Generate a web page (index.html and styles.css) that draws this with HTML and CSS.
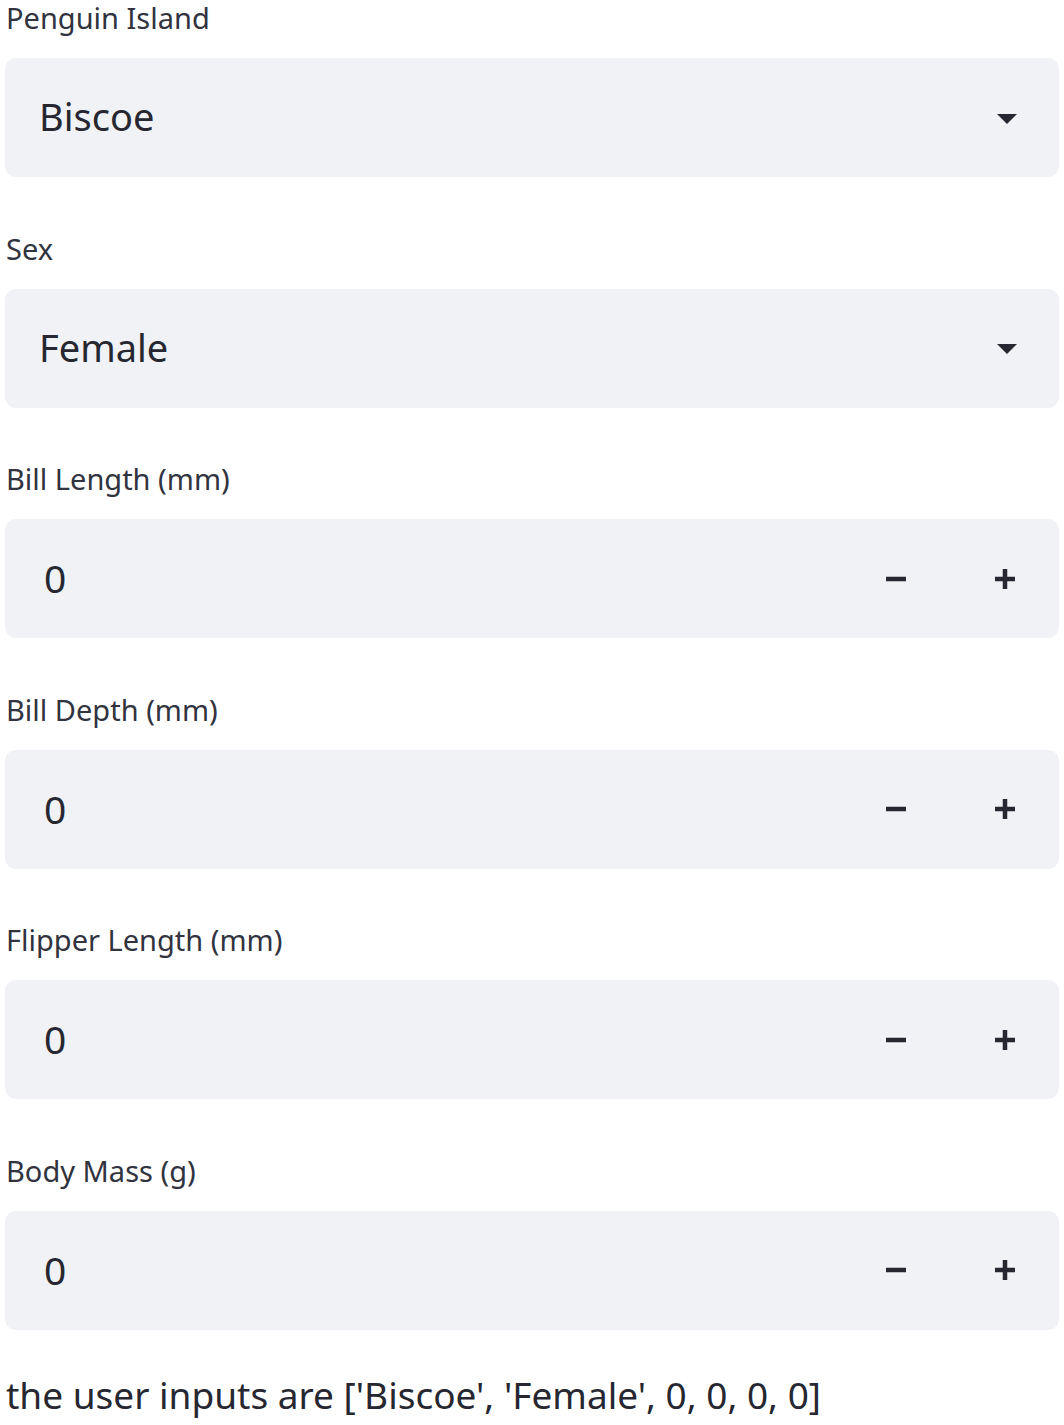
FILE: index.html
```html
<!DOCTYPE html>
<html lang="en">
<head>
<meta charset="utf-8">
<title>Penguin inputs</title>
<link rel="stylesheet" href="styles.css">
</head>
<body>
<main class="page">
  <div class="field">
    <div class="label">Penguin Island</div>
    <div class="box select">
      <span class="value">Biscoe</span>
      <svg class="caret" width="20" height="10" viewBox="0 0 20 10"><path d="M0 0h20L10 10z" fill="#262730"/></svg>
    </div>
  </div>
  <div class="field">
    <div class="label">Sex</div>
    <div class="box select">
      <span class="value">Female</span>
      <svg class="caret" width="20" height="10" viewBox="0 0 20 10"><path d="M0 0h20L10 10z" fill="#262730"/></svg>
    </div>
  </div>
  <div class="field">
    <div class="label">Bill Length (mm)</div>
    <div class="box number">
      <span class="num">0</span>
      <div class="steps">
        <svg class="step" width="20" height="20" viewBox="0 0 20 20"><rect x="0" y="7.75" width="20" height="4.5" fill="#262730"/></svg>
        <svg class="step" width="20" height="20" viewBox="0 0 20 20"><rect x="0" y="7.75" width="20" height="4.5" fill="#262730"/><rect x="7.75" y="0" width="4.5" height="20" fill="#262730"/></svg>
      </div>
    </div>
  </div>
  <div class="field">
    <div class="label">Bill Depth (mm)</div>
    <div class="box number">
      <span class="num">0</span>
      <div class="steps">
        <svg class="step" width="20" height="20" viewBox="0 0 20 20"><rect x="0" y="7.75" width="20" height="4.5" fill="#262730"/></svg>
        <svg class="step" width="20" height="20" viewBox="0 0 20 20"><rect x="0" y="7.75" width="20" height="4.5" fill="#262730"/><rect x="7.75" y="0" width="4.5" height="20" fill="#262730"/></svg>
      </div>
    </div>
  </div>
  <div class="field">
    <div class="label">Flipper Length (mm)</div>
    <div class="box number">
      <span class="num">0</span>
      <div class="steps">
        <svg class="step" width="20" height="20" viewBox="0 0 20 20"><rect x="0" y="7.75" width="20" height="4.5" fill="#262730"/></svg>
        <svg class="step" width="20" height="20" viewBox="0 0 20 20"><rect x="0" y="7.75" width="20" height="4.5" fill="#262730"/><rect x="7.75" y="0" width="4.5" height="20" fill="#262730"/></svg>
      </div>
    </div>
  </div>
  <div class="field">
    <div class="label">Body Mass (g)</div>
    <div class="box number">
      <span class="num">0</span>
      <div class="steps">
        <svg class="step" width="20" height="20" viewBox="0 0 20 20"><rect x="0" y="7.75" width="20" height="4.5" fill="#262730"/></svg>
        <svg class="step" width="20" height="20" viewBox="0 0 20 20"><rect x="0" y="7.75" width="20" height="4.5" fill="#262730"/><rect x="7.75" y="0" width="4.5" height="20" fill="#262730"/></svg>
      </div>
    </div>
  </div>
  <p class="result">the user inputs are ['Biscoe', 'Female', 0, 0, 0, 0]</p>
</main>
</body>
</html>
```

FILE: styles.css
```css
html, body {
  margin: 0;
  padding: 0;
  background: #ffffff;
}
body {
  font-family: "Noto Sans", "Open Sans", sans-serif;
  color: #262730;
}
.page {
  padding-left: 5px;
  width: 1054px;
}
.field {
  margin-bottom: 53.5px;
}
.label {
  font-size: 29px;
  line-height: 36px;
  height: 36px;
  margin-bottom: 22px;
  padding-left: 1px;
  color: #31333f;
}
.box {
  height: 119px;
  background: #f0f2f6;
  border-radius: 11px;
  display: flex;
  align-items: center;
  justify-content: space-between;
  box-sizing: border-box;
}
.select {
  padding: 0 42px 0 34px;
}
.value {
  font-size: 38px;
  line-height: 1;
  margin-top: -3px;
}
.caret {
  display: block;
  margin-top: 2px;
}
.number {
  padding: 0 44px 0 39px;
}
.num {
  font-size: 39px;
  line-height: 1;
  margin-top: -2px;
}
.steps {
  display: flex;
  gap: 89px;
  align-items: center;
}
.step {
  display: block;
}
.result {
  margin: -12px 0 0 1px;
  font-size: 37px;
  line-height: 48px;
}
```
